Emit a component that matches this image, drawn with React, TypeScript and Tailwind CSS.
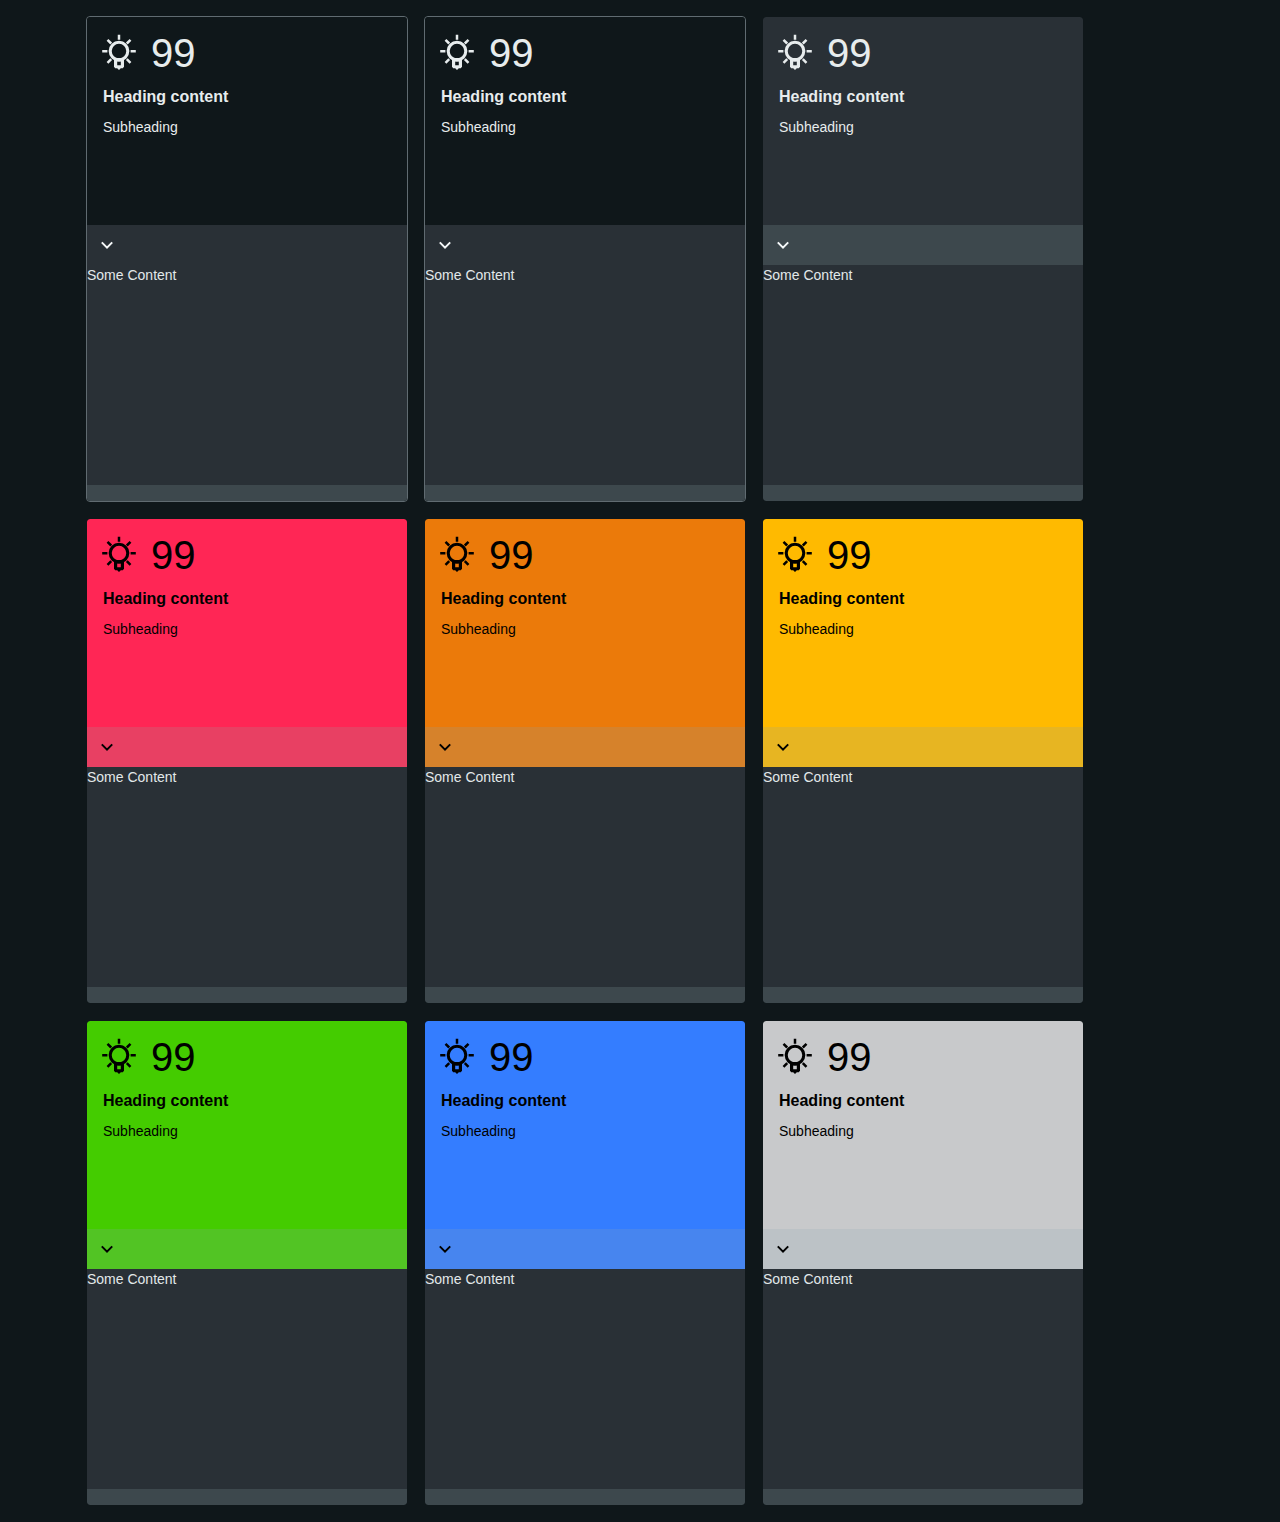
type Tone = { card: string; header: string; bar: string };

const tones: Tone[] = [
  { card: 'border-[#606b71]', header: 'bg-[#0f171a] text-[#e7eced]', bar: 'bg-[#293036] text-[#f5f8f9]' },
  { card: 'border-[#606b71]', header: 'bg-[#0f171a] text-[#e7eced]', bar: 'bg-[#293036] text-[#f5f8f9]' },
  { card: 'border-transparent', header: 'bg-[#293036] text-[#e7eced]', bar: 'bg-[#3d484d] text-[#f5f8f9]' },
  { card: 'border-transparent', header: 'bg-[#ff2655] text-black', bar: 'bg-[#e84063] text-black' },
  { card: 'border-transparent', header: 'bg-[#eb7a0a] text-black', bar: 'bg-[#d6822b] text-black' },
  { card: 'border-transparent', header: 'bg-[#ffba00] text-black', bar: 'bg-[#e7b522] text-black' },
  { card: 'border-transparent', header: 'bg-[#44cc00] text-black', bar: 'bg-[#52c424] text-black' },
  { card: 'border-transparent', header: 'bg-[#347dff] text-black', bar: 'bg-[#4785ef] text-black' },
  { card: 'border-transparent', header: 'bg-[#c8c9cb] text-black', bar: 'bg-[#bcc2c6] text-black' },
];

function BulbIcon() {
  return (
    <svg className="-ml-0.5 size-9 shrink-0 overflow-visible" viewBox="0 0 36 36" fill="none" stroke="currentColor">
      <circle cx="18" cy="18.1" r="8.8" strokeWidth="3.1" />
      <path
        strokeWidth="2.5"
        d="M18 1.8v4.9M1.2 18.2h5.2M29.6 18.2h5.2M6.5 6.8l3.7 3.7M29.5 6.8l-3.7 3.7M6.5 29.8l3.7-3.7M29.5 29.8l-3.7-3.7"
      />
      <path
        fill="currentColor"
        stroke="none"
        fillRule="evenodd"
        d="M13 25h10v8.8l-1.2 1.4h-2L18 37l-1.8-1.8h-2L13 33.8zM16.2 28.6v3.6h3.6v-3.6z"
      />
    </svg>
  );
}

function Card({ tone }: { tone: Tone }) {
  return (
    <article className={`flex h-[486px] w-[322px] flex-col overflow-hidden rounded border bg-clip-padding ${tone.card}`}>
      <header className={`h-52 shrink-0 rounded-t-[3px] px-4 pt-4 ${tone.header}`}>
        <div className="flex h-10 items-start gap-[14px]">
          <BulbIcon />
          <span className="text-[40px] leading-10">99</span>
        </div>
        <h2 className="mt-3 text-base leading-6 font-bold">Heading content</h2>
        <p className="mt-2 text-sm leading-5">Subheading</p>
      </header>
      <div className={`flex h-10 shrink-0 items-center pl-[13px] ${tone.bar}`}>
        <svg className="size-[14px]" viewBox="0 0 14 14" fill="none" stroke="currentColor" strokeWidth="2">
          <path d="M1.8 4.4 7 9.6l5.2-5.2" />
        </svg>
      </div>
      <div className="h-[220px] shrink-0 bg-[#293036] text-sm leading-5 text-[#e2e8ea]">Some Content</div>
      <footer className="h-4 shrink-0 rounded-b-[3px] bg-[#3d484d]" />
    </article>
  );
}

export default function App() {
  return (
    <main className="min-h-[1522px] bg-[#0f171a] pt-4 pl-[86px] font-['Liberation_Sans',Arial,sans-serif]">
      <div className="grid w-[998px] grid-cols-3 gap-4">
        {tones.map((tone, i) => (
          <Card key={i} tone={tone} />
        ))}
      </div>
    </main>
  );
}
